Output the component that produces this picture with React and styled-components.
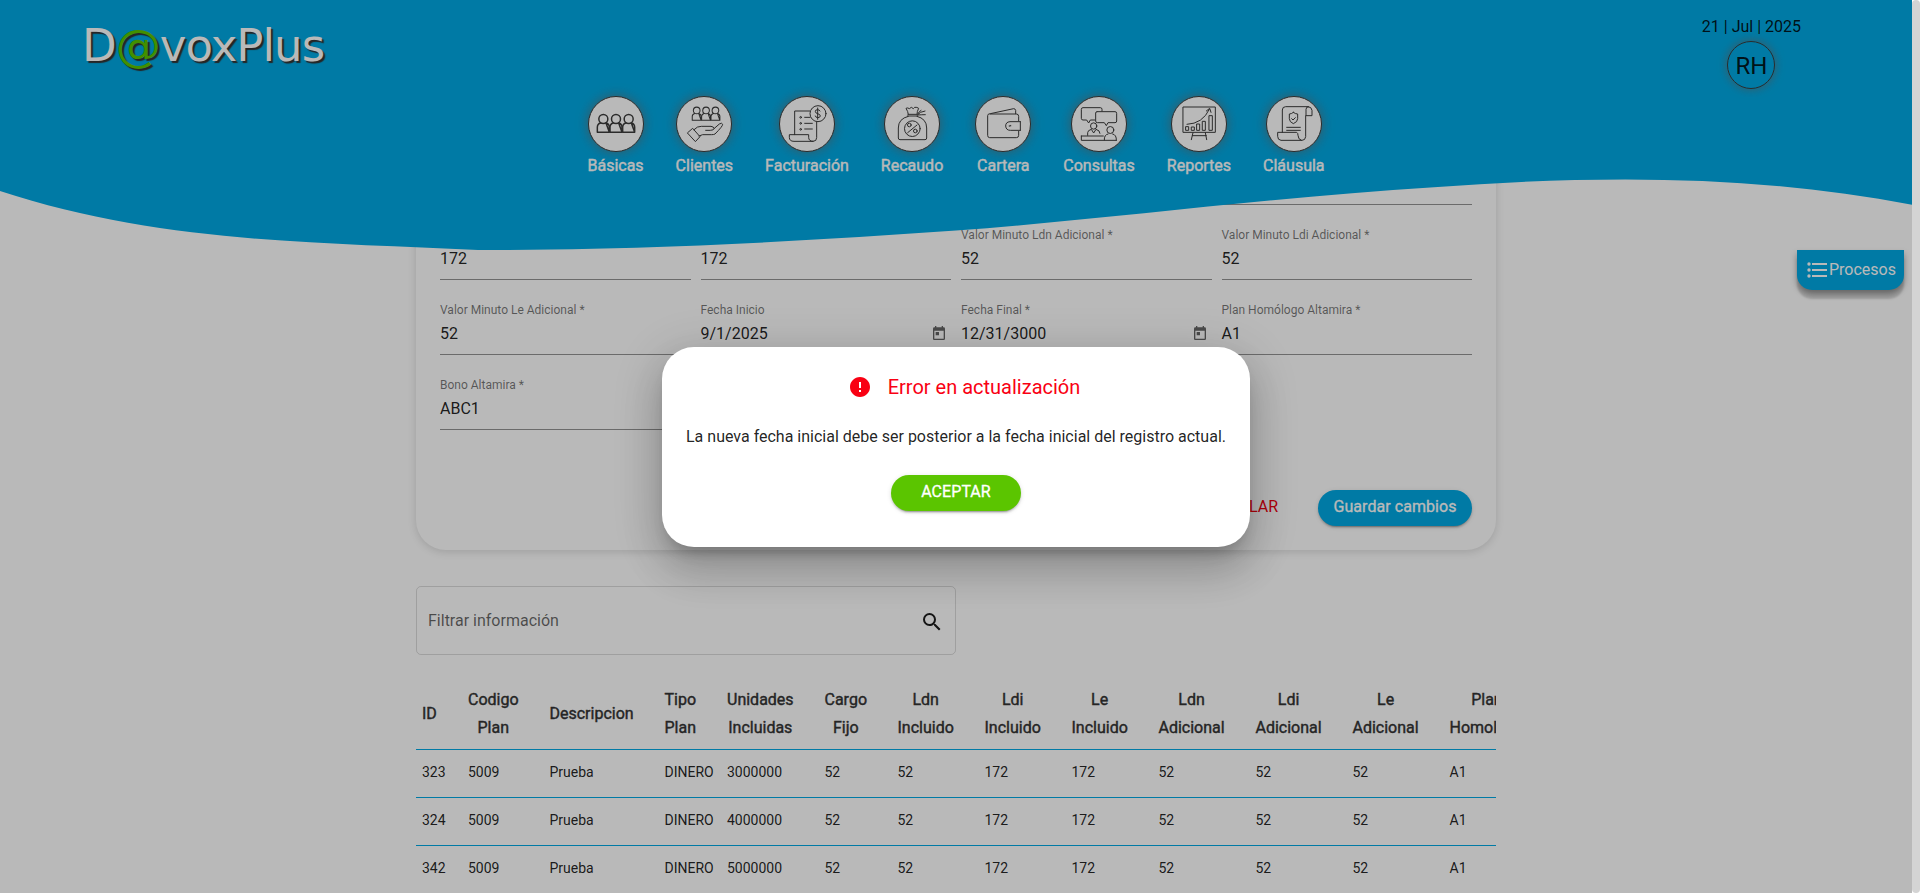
import React from "react";
import styled, { createGlobalStyle, css } from "styled-components";

const BLUE = "#00a9e4";
const LINE = "rgba(0, 0, 0, 0.42)";

const GlobalStyle = createGlobalStyle`
  * { box-sizing: border-box; }
  html, body { margin: 0; height: 893px; overflow: hidden; }
  body {
    font-family: Roboto, "Liberation Sans", sans-serif;
    font-size: 16px;
    color: rgba(0, 0, 0, 0.87);
    background: #fff;
  }
`;

const emphasis = css`
  font-weight: 400;
  -webkit-text-stroke: 0.4px currentColor;
`;

const Shell = styled.div`
  display: flex;
  height: 893px;
`;

const Page = styled.div`
  position: relative;
  flex: 1;
  height: 893px;
  overflow: hidden;
  background: #fff;
`;

const ScrollTrack = styled.div`
  width: 8px;
  background: #fff;
`;

const ScrollThumb = styled.div`
  width: 8px;
  height: ${(p) => p.$size};
  border-radius: 4px;
  background: #d4d4d4;
`;

const Header = styled.header`
  position: absolute;
  inset: 0 0 auto 0;
  z-index: 2;
  height: 250px;
  pointer-events: none;
`;

const Wave = styled.svg`
  position: absolute;
  inset: 0;
  width: 100%;
  height: 250px;
  fill: ${BLUE};
`;

const TopBar = styled.div`
  position: relative;
  display: flex;
  justify-content: space-between;
  height: 96px;
  padding: 17px 111px 0 82px;
`;

const Logo = styled.div`
  padding-top: 2px;
  font: 45px/54px "DejaVu Sans", sans-serif;
  letter-spacing: -0.95px;
  color: #fff;
  text-shadow: 2px 2px 1px #333;
  white-space: nowrap;

  span { color: #5bc500; }
`;

const Session = styled.div`
  display: flex;
  flex-direction: column;
  align-items: center;
  gap: 5px;
  line-height: 19px;
`;

const Avatar = styled.div`
  display: flex;
  align-items: center;
  justify-content: center;
  width: 48px;
  height: 48px;
  padding-top: 2px;
  border: 1px solid #3c3c3c;
  border-radius: 50%;
  box-shadow: 0 0 10px rgba(110, 110, 110, 0.8);
  font-size: 24px;
`;

const Nav = styled.nav`
  position: relative;
  display: flex;
  justify-content: center;
  gap: 32px;
`;

const NavItem = styled.a`
  display: flex;
  flex-direction: column;
  align-items: center;
  color: #fff;
  line-height: 27px;
  ${emphasis}
`;

const NavIcon = styled.svg`
  width: 56px;
  height: 56px;
  border: 1px solid #3c3c3c;
  border-radius: 50%;
  background: #fff;
  box-shadow: 0 0 12px rgba(110, 110, 110, 0.8);
  fill: none;
  stroke: #3c3c3c;
  stroke-width: ${(p) => p.$stroke || 3};
  stroke-linecap: round;
  stroke-linejoin: round;
`;

const Main = styled.main`
  width: 1080px;
  margin: 0 auto;
`;

const Card = styled.section`
  height: 550px;
  padding: 130px 24px 0;
  border-radius: 0 0 30px 30px;
  box-shadow: 0 2px 9px rgba(0, 0, 0, 0.14);
`;

const FieldGrid = styled.div`
  display: grid;
  grid-template-columns: repeat(4, 1fr);
  grid-auto-rows: 75px;
  column-gap: 10px;
`;

const Field = styled.label`
  display: flex;
  flex-direction: column;
  height: 75px;
  padding-top: 23px;
  border-bottom: 1px solid ${LINE};
`;

const FieldLabel = styled.span`
  height: 15px;
  font-size: 12px;
  line-height: 15px;
  color: rgba(0, 0, 0, 0.54);
`;

const FieldValue = styled.span`
  display: flex;
  justify-content: space-between;
  align-items: center;
  height: 18px;
  margin-top: 6px;
  padding-right: 5px;

  svg { width: 14px; height: 14px; fill: rgba(0, 0, 0, 0.6); }
`;

const Actions = styled.div`
  display: flex;
  justify-content: flex-end;
  align-items: center;
  gap: 40px;
  margin-top: 60px;
`;

const CancelLink = styled.span`
  color: #f0000f;
  line-height: 33px;
  padding-bottom: 3px;
`;

const Pill = styled.button`
  height: 36px;
  width: ${(p) => p.$width}px;
  padding: 0 0 3px;
  border: 0;
  border-radius: 18px;
  background: ${(p) => p.$color};
  color: #fff;
  font: 400 16px Roboto, sans-serif;
  -webkit-text-stroke: 0.3px currentColor;
  letter-spacing: 0.06px;
  box-shadow: 0 3px 1px -2px rgba(0, 0, 0, 0.2), 0 2px 2px rgba(0, 0, 0, 0.14), 0 1px 5px rgba(0, 0, 0, 0.12);
`;

const Filter = styled.div`
  display: flex;
  align-items: center;
  justify-content: space-between;
  width: 540px;
  height: 69px;
  margin-top: 36px;
  padding: 0 11px;
  border: 1px solid rgba(0, 0, 0, 0.14);
  border-radius: 5px;
  color: rgba(0, 0, 0, 0.6);

  svg { width: 24px; height: 24px; fill: #1c1c1c; margin-top: 3px; }
`;

const Table = styled.div`
  margin-top: 26px;
  overflow: hidden;
`;

const Row = styled.div`
  display: grid;
  grid-template-columns: 45px 81.5px 115px 62.5px 97.5px 73px 87px 87px 87px 97px 97px 97px 97px;
  align-items: center;
  height: ${(p) => (p.$head ? 69 : 48)}px;
  border-bottom: 1px solid ${BLUE};
  font-size: ${(p) => (p.$head ? 16 : 14)}px;

  > :first-child { padding-left: 6px; }
`;

const HeadCell = styled.div`
  justify-self: start;
  padding: 0 0 2px 7px;
  color: #333;
  line-height: 28px;
  text-align: center;
  ${emphasis}
`;

const Cell = styled.div`
  padding: 0 0 4px 7px;
`;

const Processes = styled.button`
  position: absolute;
  top: 250px;
  right: 8px;
  display: flex;
  align-items: center;
  gap: 2px;
  width: 107px;
  height: 40px;
  padding: 0 0 1px 10px;
  border: 0;
  border-radius: 0 0 15px 15px;
  background: ${BLUE};
  color: #fff;
  font: 16px Roboto, sans-serif;
  box-shadow: 0 9px 2px rgba(0, 0, 0, 0.14), 0 4px 6px rgba(0, 0, 0, 0.36);

  svg { width: 20px; height: 18px; fill: #fff; margin-top: 1px; }
`;

const Backdrop = styled.div`
  position: absolute;
  inset: 0;
  z-index: 5;
  display: flex;
  align-items: center;
  justify-content: center;
  background: rgba(0, 0, 0, 0.275);
`;

const Dialog = styled.div`
  display: flex;
  flex-direction: column;
  align-items: center;
  width: 588px;
  height: 200px;
  padding-top: 28px;
  border-radius: 32px;
  background: #fff;
  box-shadow: 0 11px 15px -7px rgba(0, 0, 0, 0.2), 0 24px 38px 3px rgba(0, 0, 0, 0.14),
    0 9px 46px 8px rgba(0, 0, 0, 0.12);
`;

const DialogTitle = styled.h2`
  display: flex;
  align-items: center;
  gap: 16px;
  margin: 0;
  padding-left: 16px;
  color: #f90013;
  font-size: 20px;
  font-weight: 400;
  line-height: 24px;

  svg { width: 24px; height: 24px; fill: currentColor; }
`;

const Message = styled.p`
  margin: 28px 0 29px;
  line-height: 19px;
`;

const people = (x, y, s = 1) => (
  <g transform={`translate(${x} ${y}) scale(${s})`}>
    {[0, 38, 76].map((d) => (
      <g key={d}>
        <circle cx={19 + d} cy="14" r="13.5" />
        <path d={`M${1 + d} 54 V39 Q${1 + d} 28 ${11 + d} 26 M${27 + d} 26 Q${37 + d} 28 ${37 + d} 39 V54 Z M${1 + d} 54 H${37 + d}`} />
      </g>
    ))}
  </g>
);

const NAV = [
  {
    label: "Básicas",
    box: "87 51 162 162",
    stroke: 4.5,
    art: people(111, 103),
  },
  {
    label: "Clientes",
    box: "351 51 162 162",
    art: (
      <>
        <g strokeWidth="4.2">{people(396, 81, 0.74)}</g>
        <path d="M383 158 L398 145 L420 170 L407 184 Z M402 149 Q412 138 424 139 H453 Q462 140 462 146 Q461 151 451 151 L437 151 M462 146 L478 132 Q486 127 488 133 Q488 139 465 162 Q462 164 455 164 H428 L417 168" />
      </>
    ),
  },
  {
    label: "Facturación",
    box: "660 51 162 162",
    art: (
      <>
        <path d="M749 93 H704 V164 M770 126 V173 Q770 184 759 184 H702 Q688 184 688 172 V164 H746 V172 Q746 184 759 184 M734 112 H750 M734 130 H757 M734 147 H757" />
        <circle cx="774" cy="101" r="24" />
        <circle cx="722" cy="112" r="2.5" />
        <circle cx="722" cy="130" r="2.5" />
        <circle cx="722" cy="148" r="2.5" />
        <path d="M780 93 Q778 89 773 89 Q765 89 766 95 Q766 99 773 101 Q781 103 781 108 Q780 113 773 113 Q767 113 766 108 M773 84 V118" />
      </>
    ),
  },
  {
    label: "Recaudo",
    box: "975 51 162 162",
    art: (
      <>
        <path d="M1045 103 Q1044 94 1038 85 Q1043 82 1048 86 L1054 82 L1060 86 L1064 82 Q1071 81 1076 85 Q1071 94 1071 102 M1044 103 H1072 M1042 108 H1073 M1045 109 Q1015 116 1015 144 V174 Q1015 179 1020 179 H1095 Q1100 179 1100 174 V144 Q1100 116 1071 109 M1073 104 Q1079 95 1095 93 M1073 105 Q1086 104 1096 104 M1074 101 Q1078 93 1083 91" />
        <circle cx="1057" cy="146" r="23.5" />
        <path d="M1043 158 L1071 135" />
        <circle cx="1048" cy="135" r="5.5" />
        <circle cx="1066" cy="153" r="5.5" />
      </>
    ),
  },
  {
    label: "Cartera",
    box: "108 51 162 162",
    art: (
      <path d="M151 102 H229 Q236 102 236 109 V122 M236 154 V166 Q236 173 229 173 H149 Q143 173 143 166 V107 Q143 101 151 101 L221 86 Q226 86 227 91 V101 M241 125 V151 M241 125 H210 Q197 126 197 138 Q198 151 211 151 H241 M208 137 V139 M212 136 V138" />
    ),
  },
  {
    label: "Consultas",
    box: "396 51 162 162",
    art: (
      <>
        <path d="M471 95 H525 Q530 95 530 100 V123 Q530 128 525 128 H504 L499 137 L493 128 H472 Q467 128 467 123 V99 Q467 95 471 95 M486 93 V88 Q486 83 481 83 H429 Q424 83 424 88 V115 Q424 120 429 120 H440 L446 129 L451 120 H464 M424 168 H490 M424 168 V181 H529 M443 166 V158 Q443 151 454 148 L461 159 L468 148 Q480 151 480 160 M493 180 Q492 164 504 162 M518 162 Q530 164 529 181" />
        <circle cx="461" cy="138" r="9.5" />
        <circle cx="511" cy="150" r="10.5" />
      </>
    ),
  },
  {
    label: "Reportes",
    box: "696 51 162 162",
    art: (
      <path d="M730 81 H826 V157 H730 Z M738 140 H746 V151 H738 Z M755 141 H763 V151 H755 Z M771 132 H779 V151 H771 Z M788 124 H796 V151 H788 Z M808 107 H817 V151 H808 Z M741 133 Q788 131 808 88 M799 93 L809 85 L813 97 M759 158 L754 179 M796 158 L800 179 M757 167 H799" />
    ),
  },
  {
    label: "Cláusula",
    box: "981 51 162 162",
    art: (
      <path d="M1027 157 V90 Q1027 80 1037 80 H1104 Q1115 81 1116 91 V107 H1098 V88 Q1098 80 1106 80 M1097 107 V170 Q1096 181 1086 181 H1023 Q1013 180 1013 169 V157 H1070 Q1074 159 1074 166 Q1074 178 1084 181 M1060 97 Q1066 102 1073 102 V116 Q1073 126 1060 131 Q1048 126 1048 116 V102 Q1055 102 1060 97 M1055 116 L1059 120 L1066 113 M1040 142 H1081 M1040 151 H1081" />
    ),
  },
];

const FIELDS = [
  ["", ""],
  ["", ""],
  ["", ""],
  ["", ""],
  ["", "172"],
  ["", "172"],
  ["Valor Minuto Ldn Adicional *", "52"],
  ["Valor Minuto Ldi Adicional *", "52"],
  ["Valor Minuto Le Adicional *", "52"],
  ["Fecha Inicio", "9/1/2025", true],
  ["Fecha Final *", "12/31/3000", true],
  ["Plan Homólogo Altamira *", "A1"],
  ["Bono Altamira *", "ABC1"],
];

const COLUMNS = [
  "ID", "Codigo Plan", "Descripcion", "Tipo Plan", "Unidades Incluidas", "Cargo Fijo",
  "Ldn Incluido", "Ldi Incluido", "Le Incluido", "Ldn Adicional", "Ldi Adicional",
  "Le Adicional", "Plan Homologo",
];

const ROWS = [
  ["323", "3000000"],
  ["324", "4000000"],
  ["342", "5000000"],
].map(([id, units]) => [id, "5009", "Prueba", "DINERO", units, "52", "52", "172", "172", "52", "52", "52", "A1"]);

const CalendarIcon = () => (
  <svg viewBox="3 1 18 21">
    <path d="M19 3h-1V1h-2v2H8V1H6v2H5a2 2 0 0 0-2 2v15c0 1.100.9 2 2 2h14a2 2 0 0 0 2-2V5a2 2 0 0 0-2-2zm0 17H5V8h14v12zM7 10h5v5H7z" />
  </svg>
);

export default function App() {
  return (
    <Shell>
      <GlobalStyle />
      <Page>
        <Header>
          <Wave viewBox="0 0 1912 250" preserveAspectRatio="none">
            <path d="M0 191 C159 243.500 319 242 478 250 C637 250.300 797 241.800 956 230.600 C1115 218.500 1275 196.900 1434 187.200 C1593 175.500 1753 174 1912 204.700 V0 H0 Z" />
          </Wave>
          <TopBar>
            <Logo>D<span>@</span>voxPlus</Logo>
            <Session>
              21 | Jul | 2025
              <Avatar>RH</Avatar>
            </Session>
          </TopBar>
          <Nav>
            {NAV.map((item) => (
              <NavItem key={item.label}>
                <NavIcon viewBox={item.box} $stroke={item.stroke}>{item.art}</NavIcon>
                {item.label}
              </NavItem>
            ))}
          </Nav>
        </Header>

        <Main>
          <Card>
            <FieldGrid>
              {FIELDS.map(([label, value, date], i) => (
                <Field key={i}>
                  <FieldLabel>{label}</FieldLabel>
                  <FieldValue>
                    {value}
                    {date && <CalendarIcon />}
                  </FieldValue>
                </Field>
              ))}
            </FieldGrid>
            <Actions>
              <CancelLink>CANCELAR</CancelLink>
              <Pill $width={154} $color={BLUE}>Guardar cambios</Pill>
            </Actions>
          </Card>

          <Filter>
            Filtrar información
            <svg viewBox="0 0 24 24">
              <path d="M15.500 14h-.79l-.28-.27A6.470 6.470 0 0 0 16 9.500 6.500 6.500 0 1 0 9.500 16c1.610 0 3.090-.59 4.230-1.570l.27.28v.79l5 4.990L20.490 19l-4.990-5zm-6 0a4.500 4.500 0 1 1 0-9 4.500 4.500 0 0 1 0 9z" />
            </svg>
          </Filter>

          <Table>
            <Row $head>
              {COLUMNS.map((name) => (
                <HeadCell key={name}>
                  {name.split(" ").map((word) => <div key={word}>{word}</div>)}
                </HeadCell>
              ))}
            </Row>
            {ROWS.map((cells) => (
              <Row key={cells[0]}>
                {cells.map((cell, i) => <Cell key={i}>{cell}</Cell>)}
              </Row>
            ))}
          </Table>
        </Main>

        <Processes>
          <svg viewBox="0 0 20 18">
            <circle cx="2" cy="3" r="1.700" />
            <circle cx="2" cy="9" r="1.700" />
            <circle cx="2" cy="15" r="1.700" />
            <path d="M5 2h15v2H5zM5 8h15v2H5zM5 14h15v2H5z" />
          </svg>
          Procesos
        </Processes>

        <Backdrop>
          <Dialog>
            <DialogTitle>
              <svg viewBox="0 0 24 24">
                <path d="M12 2C6.480 2 2 6.480 2 12s4.480 10 10 10 10-4.480 10-10S17.520 2 12 2zm1 15h-2v-2h2v2zm0-4h-2V7h2v6z" />
              </svg>
              Error en actualización
            </DialogTitle>
            <Message>La nueva fecha inicial debe ser posterior a la fecha inicial del registro actual.</Message>
            <Pill $width={130} $color="#5bc500">ACEPTAR</Pill>
          </Dialog>
        </Backdrop>
      </Page>
      <ScrollTrack>
        <ScrollThumb $size="893px" />
      </ScrollTrack>
    </Shell>
  );
}
